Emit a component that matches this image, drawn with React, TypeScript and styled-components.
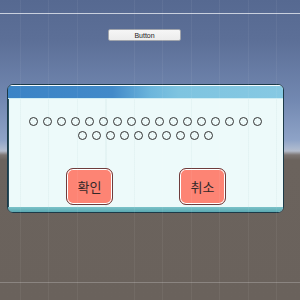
import React from 'react';
import styled, { createGlobalStyle } from 'styled-components';

const GlobalStyle = createGlobalStyle`
  html, body {
    margin: 0;
    padding: 0;
    background: #6a625c;
  }
  * {
    box-sizing: border-box;
  }
`;

const ROW_ONE = 17;
const ROW_TWO = 10;

const App: React.FC = () => {
  const circles = Array.from({ length: ROW_ONE + ROW_TWO });

  return (
    <>
      <GlobalStyle />
      <Scene>
        <TopStrip />
        <ButtonRow>
          <EditorButton>Button</EditorButton>
        </ButtonRow>
        <Popup>
          <PopupHeader />
          <PopupBody>
            <CircleGrid>
              {circles.map((_, i) => (
                <Circle key={i} />
              ))}
            </CircleGrid>
            <ActionRow>
              <ActionButton>확인</ActionButton>
              <ActionButton>취소</ActionButton>
            </ActionRow>
          </PopupBody>
          <PopupFooter />
        </Popup>
        <GroundLine />
      </Scene>
    </>
  );
};

export default App;

const Scene = styled.div`
  position: relative;
  width: 300px;
  height: 300px;
  overflow: hidden;
  display: flex;
  flex-direction: column;
  background: linear-gradient(
    to bottom,
    #566991 0px,
    #5c6f97 40px,
    #7288b1 100px,
    #8ea3c7 140px,
    #a9b7ce 148px,
    #b4bccb 151px,
    #7c7572 155px,
    #6b635d 160px,
    #6a625c 300px
  );

  &::after {
    content: '';
    position: absolute;
    inset: 0;
    pointer-events: none;
    background-image: repeating-linear-gradient(
      to right,
      transparent 0px,
      transparent 20px,
      rgba(255, 255, 255, 0.05) 20px,
      rgba(255, 255, 255, 0.05) 21px,
      transparent 21px,
      transparent 28.5px
    );
  }
`;

const TopStrip = styled.div`
  height: 14px;
  flex-shrink: 0;
  border-bottom: 1px solid #c9d0de;
`;

const ButtonRow = styled.div`
  display: flex;
  padding-left: 108px;
  margin-top: 15px;
`;

const EditorButton = styled.div`
  width: 73px;
  height: 12px;
  display: flex;
  align-items: center;
  justify-content: center;
  background: linear-gradient(to bottom, #f6f6f6, #ececec);
  border: 1px solid #a0a4ac;
  border-radius: 2px;
  font-family: 'Liberation Sans', Arial, sans-serif;
  font-size: 7px;
  color: #1c1c1c;
`;

const Popup = styled.div`
  margin-top: 43px;
  margin-left: 7px;
  width: 277px;
  height: 129px;
  display: flex;
  flex-direction: column;
  border: 1px solid #1c3a48;
  border-radius: 6px;
  overflow: hidden;
  background: #edfafa;
  box-shadow: inset 1px 0 0 #2a4f5c;
`;

const PopupHeader = styled.div`
  height: 14px;
  flex-shrink: 0;
  border-top: 1px solid #f4fbff;
  border-bottom: 1px solid #cfeef4;
  background: linear-gradient(
    to right,
    #3b84c6 0%,
    #428ac9 38%,
    #6cb6dc 52%,
    #7ec4e0 62%,
    #86c9e3 100%
  );
`;

const PopupBody = styled.div`
  flex: 1;
  display: flex;
  flex-direction: column;
  align-items: center;
  padding-top: 18px;
  background-image: repeating-linear-gradient(
    to right,
    transparent 0px,
    transparent 12px,
    rgba(120, 170, 170, 0.08) 12px,
    rgba(120, 170, 170, 0.08) 13px,
    transparent 13px,
    transparent 28.5px
  );
`;

const CircleGrid = styled.div`
  width: 240px;
  display: flex;
  flex-wrap: wrap;
  justify-content: center;
  gap: 5px 5px;
`;

const Circle = styled.span`
  width: 9px;
  height: 9px;
  border-radius: 50%;
  border: 1.5px solid #333333;
`;

const ActionRow = styled.div`
  display: flex;
  gap: 66px;
  margin-top: 28px;
  padding-left: 1px;
`;

const ActionButton = styled.div`
  width: 47px;
  height: 37px;
  display: flex;
  align-items: center;
  justify-content: center;
  background: #fd8474;
  border: 1px solid #6e3c3c;
  border-radius: 7px;
  box-shadow: inset 0 0 0 1px #ffffff;
  font-family: 'Noto Sans CJK KR', 'Noto Sans', sans-serif;
  font-size: 13px;
  font-weight: 400;
  color: #332828;
`;

const PopupFooter = styled.div`
  height: 5px;
  flex-shrink: 0;
  background: linear-gradient(to bottom, #7cc3c9, #5aa8b1);
`;

const GroundLine = styled.div`
  margin-top: auto;
  margin-bottom: 17px;
  height: 1px;
  background: #8b8581;
`;
